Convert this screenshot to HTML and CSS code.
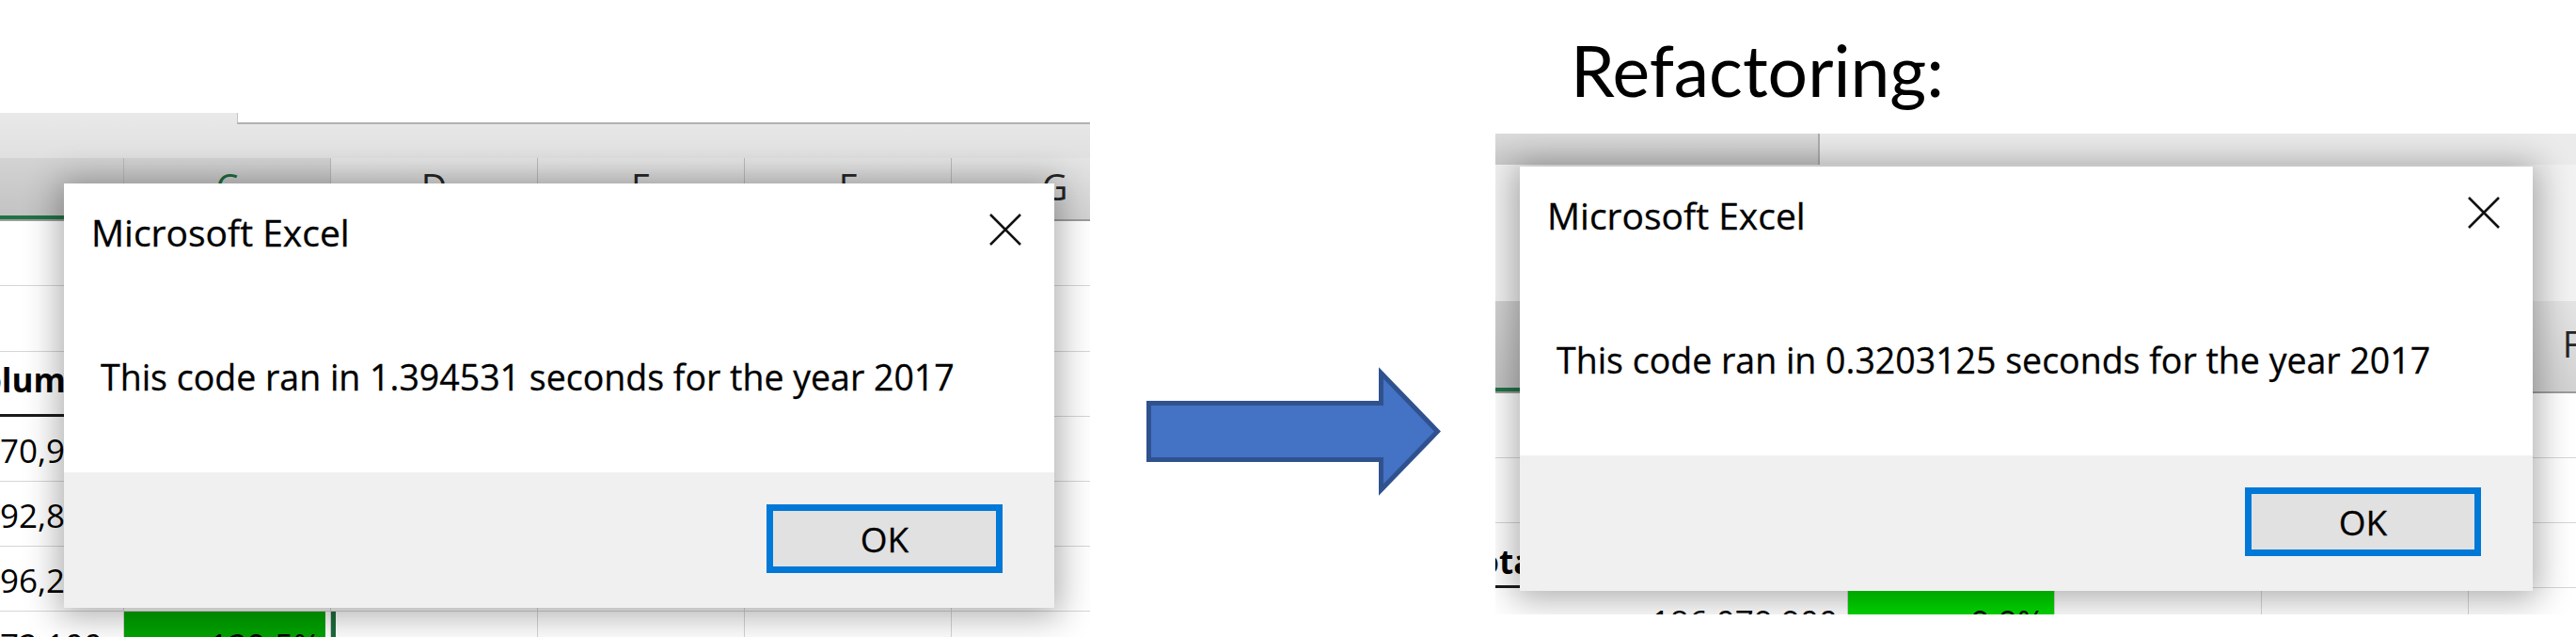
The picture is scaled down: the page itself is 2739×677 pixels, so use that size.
FILE: index.html
```html
<!DOCTYPE html>
<html lang="en">
<head>
<meta charset="utf-8">
<title>Refactoring: run time comparison</title>
<link rel="stylesheet" href="styles.css">
</head>
<body>
<div class="slide">

  <section class="shot shot-before">
    <div class="topband"><div class="fbox"></div></div>
    <div class="grid grid-before colhdr">
      <div class="ch sel"></div>
      <div class="ch sel sel-letter">C</div>
      <div class="ch">D</div>
      <div class="ch">E</div>
      <div class="ch">F</div>
      <div class="ch">G</div>
    </div>
    <div class="grid grid-before row">
      <div class="c"></div><div class="c"></div><div class="c"></div><div class="c"></div><div class="c"></div><div class="c"></div>
    </div>
    <div class="grid grid-before row row-tall">
      <div class="c"></div><div class="c"></div><div class="c"></div><div class="c"></div><div class="c"></div><div class="c"></div>
    </div>
    <div class="grid grid-before row">
      <div class="c hd"><span class="shift-total">Total Daily Volume</span></div><div class="c hd">Return</div><div class="c"></div><div class="c"></div><div class="c"></div><div class="c"></div>
    </div>
    <div class="grid grid-before row">
      <div class="c"><span class="shift-num">170,955,300</span></div><div class="c"></div><div class="c"></div><div class="c"></div><div class="c"></div><div class="c"></div>
    </div>
    <div class="grid grid-before row">
      <div class="c"><span class="shift-num">192,851,800</span></div><div class="c"></div><div class="c"></div><div class="c"></div><div class="c"></div><div class="c"></div>
    </div>
    <div class="grid grid-before row">
      <div class="c"><span class="shift-num">196,227,300</span></div><div class="c"></div><div class="c"></div><div class="c"></div><div class="c"></div><div class="c"></div>
    </div>
    <div class="grid grid-before row">
      <div class="c"><span class="shift-num">172,100</span></div><div class="c num green-dark">129.5%</div><div class="c sel-edge"></div><div class="c"></div><div class="c"></div><div class="c"></div>
    </div>

    <div class="dialog dialog-before">
      <div class="dlg-body">
        <div class="dlg-titlebar">
          <span class="dlg-title">Microsoft Excel</span>
          <svg class="dlg-close" viewBox="0 0 36 36" aria-hidden="true"><path d="M2 2 L34 34 M34 2 L2 34" /></svg>
        </div>
        <p class="dlg-msg">This code ran in 1.394531 seconds for the year 2017</p>
      </div>
      <div class="dlg-footer"><button class="dlg-ok" type="button">OK</button></div>
    </div>
  </section>

  <svg class="arrow" viewBox="0 0 320 137" aria-hidden="true">
    <path d="M5.5 38.5 H252.5 V6.5 L312.5 68.5 L252.5 130.5 V98.5 H5.5 Z" />
  </svg>

  <div class="after-col">
    <h1 class="slide-title">Refactoring:</h1>
    <section class="shot shot-after">
      <div class="band-top"><div class="bt-l"></div><div class="bt-r"></div></div>
      <div class="band-mid"></div>
      <div class="grid grid-after colhdr colhdr-after">
        <div class="ch sel"></div>
        <div class="ch">C</div>
        <div class="ch">D</div>
        <div class="ch">E</div>
        <div class="ch">F</div>
      </div>
      <div class="grid grid-after row">
        <div class="c"></div><div class="c"></div><div class="c"></div><div class="c"></div><div class="c"></div>
      </div>
      <div class="grid grid-after row">
        <div class="c"></div><div class="c"></div><div class="c"></div><div class="c"></div><div class="c"></div>
      </div>
      <div class="grid grid-after row">
        <div class="c hd hd-after"><span class="shift-total-after">Total Daily Volume</span></div><div class="c hd hd-after">Return</div><div class="c"></div><div class="c"></div><div class="c"></div>
      </div>
      <div class="grid grid-after row">
        <div class="c num">186,079,900</div><div class="c num green-bright">9.9%</div><div class="c"></div><div class="c"></div><div class="c"></div>
      </div>

      <div class="dialog dialog-after">
        <div class="dlg-body">
          <div class="dlg-titlebar">
            <span class="dlg-title">Microsoft Excel</span>
            <svg class="dlg-close" viewBox="0 0 36 36" aria-hidden="true"><path d="M2 2 L34 34 M34 2 L2 34" /></svg>
          </div>
          <p class="dlg-msg">This code ran in 0.3203125 seconds for the year 2017</p>
        </div>
        <div class="dlg-footer"><button class="dlg-ok" type="button">OK</button></div>
      </div>
    </section>
  </div>

</div>
</body>
</html>
```
FILE: styles.css
```css
* { box-sizing: border-box; margin: 0; padding: 0; }

html, body { background: #ffffff; }

body {
  width: 2739px;
  height: 677px;
  overflow: hidden;
  font-family: "Open Sans", "Noto Sans", sans-serif;
  color: #000;
}

.slide {
  display: flex;
  align-items: flex-start;
  width: 2739px;
  height: 677px;
}

/* ---------- screenshots ---------- */
.shot {
  position: relative;
  overflow: hidden;
  background: #ffffff;
  flex: none;
}

.shot-before {
  width: 1159px;
  height: 557px;
  margin-top: 120px;
}

.topband {
  height: 48px;
  background: linear-gradient(#e9e9e9, #e0e0e0);
  padding-left: 252px;
}

.fbox {
  height: 12px;
  background: #ffffff;
  border-left: 1px solid #c4c4c4;
  border-bottom: 2px solid #b2b2b2;
}

.grid { display: grid; }

.grid-before { grid-template-columns: 132px repeat(5, 220px); }
.grid-after { grid-template-columns: 375px repeat(4, 220px); }

.colhdr {
  height: 67px;
  background: linear-gradient(#e4e4e4, #d2d2d2);
  border-bottom: 2px solid #9c9c9c;
}

.colhdr-after { height: 98px; }

.ch {
  border-right: 1px solid #bababa;
  display: flex;
  align-items: center;
  justify-content: center;
  padding-bottom: 6px;
  font-size: 38px;
  line-height: 1;
  color: #262626;
}

.ch.sel {
  background: linear-gradient(#d3d3d3, #c2c2c2);
  box-shadow: inset 0 -4px 0 #217346;
}

.ch.sel-letter { color: #1d6b3f; }

.row { height: 69px; }
.row-tall { height: 70px; }

.c {
  border-right: 1px solid #d6d6d6;
  border-bottom: 1px solid #d6d6d6;
  overflow: hidden;
  white-space: nowrap;
  display: flex;
  align-items: flex-end;
  padding-bottom: 15px;
  font-size: 35px;
  line-height: 1;
}

.c.num {
  justify-content: flex-end;
  padding-right: 10px;
}

.c.hd {
  font-weight: 700;
  border-bottom: 3px solid #1a1a1a;
  padding-bottom: 19px;
}

.c.hd-after { padding-bottom: 8px; }

.shift-num { margin-left: -20px; }
.shift-total { margin-left: -238px; }
.shift-total-after { margin-left: -38px; }

.green-dark {
  background: #00a300;
  box-shadow: inset -5px 0 0 #ffffff;
}

.sel-edge { box-shadow: inset 5px 0 0 #1e6b3b; }

.green-bright { background: #00d600; }

/* right screenshot bands */
.shot-after {
  width: 1149px;
  height: 511px;
}

.band-top {
  display: grid;
  grid-template-columns: 345px 1fr;
  height: 33px;
}

.bt-l {
  background: linear-gradient(#dbdbdb, #c9c9c9);
  border-right: 2px solid #aeaeae;
}

.bt-r { background: #ebebeb; }

.band-mid {
  height: 145px;
  background: #f2f2f2;
}

/* ---------- message dialog (overlay) ---------- */
.dialog {
  position: absolute;
  display: flex;
  flex-direction: column;
  background: #ffffff;
  box-shadow: 0 3px 34px 6px rgba(0, 0, 0, 0.32);
}

.dialog-before { left: 68px; top: 75px; width: 1053px; height: 451px; }
.dialog-after { left: 26px; top: 35px; width: 1077px; height: 451px; }

.dlg-body { flex: 1; }

.dlg-titlebar {
  display: flex;
  justify-content: space-between;
  align-items: flex-start;
  padding: 31px 34px 0 29px;
}

.dlg-title {
  font-size: 39px;
  line-height: 39px;
  margin-top: 1px;
  -webkit-text-stroke: 0.3px #000;
}

.dlg-close {
  width: 36px;
  height: 36px;
  fill: none;
  stroke: #111;
  stroke-width: 2.6;
}

.dlg-msg {
  font-size: 37.5px;
  line-height: 1;
  padding-left: 39px;
  margin-top: 116px;
  white-space: nowrap;
  -webkit-text-stroke: 0.3px #000;
}

.dlg-footer {
  height: 144px;
  background: #f0f0f0;
  display: flex;
  justify-content: flex-end;
  align-items: flex-start;
  padding: 34px 55px 0 0;
}

.dlg-ok {
  width: 251px;
  height: 73px;
  border: 7px solid #0078d7;
  background: #e1e1e1;
  font-family: "Open Sans", "Noto Sans", sans-serif;
  font-size: 37px;
  line-height: 1;
  color: #000;
  -webkit-text-stroke: 0.3px #000;
  display: flex;
  align-items: center;
  justify-content: center;
}

/* ---------- arrow ---------- */
.arrow {
  flex: none;
  width: 320px;
  height: 137px;
  margin-left: 57px;
  margin-top: 390px;
}

.arrow path {
  fill: #4472c4;
  stroke: #2f528f;
  stroke-width: 5;
  stroke-linejoin: miter;
}

/* ---------- right column ---------- */
.after-col {
  flex: none;
  margin-left: 54px;
  width: 1149px;
  display: flex;
  flex-direction: column;
}

.slide-title {
  font-family: Lato, "Open Sans", sans-serif;
  font-weight: 400;
  font-size: 75px;
  line-height: 75px;
  margin: 37px 0 30px 80px;
  color: #000;
}
```
